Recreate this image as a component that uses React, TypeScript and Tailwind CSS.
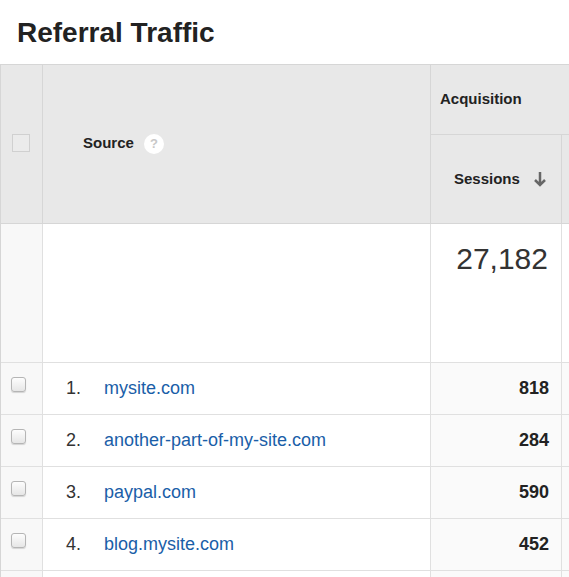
export default function App() {
  const rows = [
    ["1.", "mysite.com", "818"],
    ["2.", "another-part-of-my-site.com", "284"],
    ["3.", "paypal.com", "590"],
    ["4.", "blog.mysite.com", "452"],
  ];
  const Cb = () => (
    <div className="w-[15px] h-[15px] rounded-[3px] border border-[#b5b5b5] bg-gradient-to-b from-[#fdfdfd] to-[#e6e6e6] shadow-[0_1px_1px_rgba(0,0,0,0.15)]" />
  );
  return (
    <div className="w-[569px] h-[577px] bg-white overflow-hidden font-[Liberation_Sans,Arial,sans-serif] text-[#222]">
      <div className="h-[64px] pl-[17px] pt-[12px] text-[28px] font-bold text-[#222]">Referral Traffic</div>
      <div className="grid grid-cols-[42px_388px_131px_8px] border-t border-l border-[#d6d6d6]">
        <div className="row-span-2 h-[159px] bg-[#e8e8e8] border-r border-b border-[#d6d6d6] flex items-center justify-center">
          <div className="w-[18px] h-[18px] border border-[#d0d0d0] bg-[#ebebeb] mt-[-2px] ml-[-2px]" />
        </div>
        <div className="row-span-2 bg-[#e8e8e8] border-r border-b border-[#d6d6d6] flex items-center pl-[40px] pb-[1px] text-[15px] font-bold">
          Source
          <span className="ml-[10px] w-[20px] h-[20px] rounded-full bg-white text-[#c8c8c8] text-[13px] flex items-center justify-center">?</span>
        </div>
        <div className="col-span-2 h-[70px] bg-[#e8e8e8] border-b border-[#d6d6d6] flex items-center pl-[9px] text-[15px] font-bold">Acquisition</div>
        <div className="h-[89px] bg-[#e8e8e8] border-r border-b border-[#d6d6d6] flex items-center pl-[23px] text-[15px] font-bold">
          Sessions
          <svg className="ml-[13px]" width="14" height="16" viewBox="0 0 14 16"><path d="M7 1v13M2 9l5 5 5-5" stroke="#666" strokeWidth="2.5" fill="none" /></svg>
        </div>
        <div className="bg-[#e8e8e8] border-b border-[#d6d6d6]" />
        <div className="h-[139px] bg-[#f8f8f8] border-r border-b border-[#e0e0e0]" />
        <div className="bg-white border-r border-b border-[#e0e0e0]" />
        <div className="bg-white border-r border-b border-[#e0e0e0] text-right pr-[13px] pt-[12px] text-[30px] text-[#333]">27,182</div>
        <div className="bg-white border-b border-[#e0e0e0]" />
        {rows.map((r) => (
          <>
            <div className="h-[52px] bg-[#f8f8f8] border-r border-b border-[#e0e0e0] flex justify-center pt-[14px] pr-[7px]"><Cb /></div>
            <div className="bg-white border-r border-b border-[#e0e0e0] flex items-center text-[18px]">
              <span className="w-[61px] pl-[23px] text-[#333]">{r[0]}</span>
              <span className="text-[#1a5ea8]">{r[1]}</span>
            </div>
            <div className="bg-[#fafafa] border-r border-b border-[#e0e0e0] flex items-center justify-end pr-[12px] text-[18px] font-bold text-[#222]">{r[2]}</div>
            <div className="bg-[#fafafa] border-b border-[#e0e0e0]" />
          </>
        ))}
        <div className="h-[20px] bg-[#f8f8f8] border-r border-[#e0e0e0]" />
        <div className="bg-white border-r border-[#e0e0e0]" />
        <div className="bg-[#fafafa] border-r border-[#e0e0e0]" />
        <div className="bg-[#fafafa]" />
      </div>
    </div>
  );
}
